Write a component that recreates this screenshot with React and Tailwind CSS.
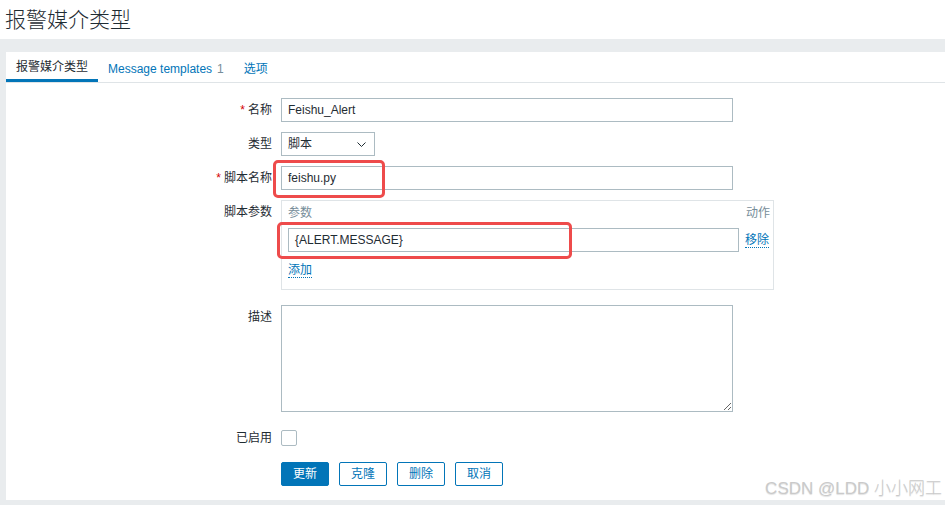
import { useState } from 'react'

const font = { fontFamily: '"Liberation Sans", Arial, "Noto Sans CJK SC", sans-serif' }

function Label({ children, required, top }) {
  return (
    <div className={`w-[266px] shrink-0 text-right text-[12px] leading-[14px] text-[#1f2c33] ${top ? 'pt-[5px]' : ''}`}>
      {required && <span className="text-[#d40000] mr-[3px]">*</span>}
      {children}
    </div>
  )
}

function TextInput({ value, width = 'w-[452px]' }) {
  return (
    <div className={`${width} h-[24px] border border-[#acbbc2] bg-white px-[6px] flex items-center text-[12px] text-[#1f2c33]`}>
      {value}
    </div>
  )
}

function Link({ children }) {
  return (
    <span className="text-[12px] leading-[14px] text-[#0275b8] border-b border-dotted border-[#0275b8]">{children}</span>
  )
}

function Btn({ children, primary }) {
  return (
    <div
      className={`w-[48px] h-[24px] flex items-center justify-center text-[12px] rounded-[2px] border ${
        primary ? 'bg-[#0275b8] border-[#0275b8] text-white' : 'bg-white border-[#0275b8] text-[#0275b8]'
      }`}
    >
      {children}
    </div>
  )
}

export default function App() {
  const [enabled, setEnabled] = useState(false)

  return (
    <div className="relative w-[945px] h-[505px] overflow-hidden bg-[#e9ecee]" style={font}>
      {/* header */}
      <div className="h-[39px] bg-white flex items-center pl-[5px]">
        <h1 className="text-[21px] leading-none text-[#1f2c33] font-light">报警媒介类型</h1>
      </div>

      {/* panel */}
      <div className="ml-[6px] mt-[13px] h-[448px] bg-white">
        {/* tabs */}
        <div className="flex h-[31px] border-b border-[#dfe4e7] text-[12px]">
          <div className="px-[10px] flex items-center text-[#1f2c33] border-b-[3px] border-[#0275b8] pt-[3px]">报警媒介类型</div>
          <div className="px-[10px] flex items-center text-[#0275b8] pt-[3px]">
            Message templates<span className="ml-[5px] text-[#768d99]">1</span>
          </div>
          <div className="px-[10px] flex items-center text-[#0275b8] pt-[3px]">选项</div>
        </div>

        {/* form */}
        <div className="pt-[15px] flex flex-col">
          <div className="flex items-center gap-[9px]">
            <Label required>名称</Label>
            <TextInput value="Feishu_Alert" />
          </div>

          <div className="flex items-center gap-[9px] mt-[10px]">
            <Label>类型</Label>
            <div className="w-[94px] h-[24px] border border-[#acbbc2] bg-white pl-[6px] pr-[8px] flex items-center justify-between text-[12px] text-[#1f2c33]">
              脚本
              <svg width="9" height="5" viewBox="0 0 9 5" fill="none" stroke="#1f2c33" strokeWidth="1">
                <path d="M0.5 0.5l4 4 4-4" />
              </svg>
            </div>
          </div>

          <div className="flex items-center gap-[9px] mt-[10px]">
            <Label required>脚本名称</Label>
            <TextInput value="feishu.py" />
          </div>

          <div className="flex items-start gap-[9px] mt-[10px]">
            <Label top>脚本参数</Label>
            <div className="w-[493px] h-[90px] border border-[#dfe4e7] pl-[6px] pr-[3px] pt-[5px] text-[12px]">
              <div className="flex justify-between leading-[14px] text-[#768d99]">
                <span>参数</span>
                <span>动作</span>
              </div>
              <div className="flex items-center gap-[6px] mt-[8px]">
                <TextInput value="{ALERT.MESSAGE}" width="w-[451px]" />
                <Link>移除</Link>
              </div>
              <div className="mt-[11px] leading-[14px]">
                <Link>添加</Link>
              </div>
            </div>
          </div>

          <div className="flex items-start gap-[9px] mt-[15px]">
            <Label top>描述</Label>
            <textarea
              className="w-[452px] h-[107px] border border-[#acbbc2] bg-white text-[12px] outline-none"
              defaultValue=""
            />
          </div>

          <div className="flex items-center gap-[9px] mt-[18px] h-[16px]">
            <Label>已启用</Label>
            <div
              onClick={() => setEnabled(!enabled)}
              className="w-[16px] h-[16px] border border-[#acbbc2] rounded-[2px] bg-white"
            />
          </div>

          <div className="flex gap-[10px] mt-[16px] ml-[275px]">
            <Btn primary>更新</Btn>
            <Btn>克隆</Btn>
            <Btn>删除</Btn>
            <Btn>取消</Btn>
          </div>
        </div>
      </div>

      {/* annotation highlights */}
      <div className="absolute left-[273px] top-[160px] w-[112px] h-[38px] border-[3px] border-[#ee4b4b] rounded-[5px]" />
      <div className="absolute left-[277px] top-[222px] w-[295px] h-[37px] border-[3px] border-[#ee4b4b] rounded-[5px]" />

      {/* watermark */}
      <div
        className="absolute right-[3px] top-[478px] text-[17px] leading-[22px] text-[#cacaca] font-light"
        style={{ textShadow: '0 1px 1px rgba(0,0,0,0.12)' }}
      >
        CSDN @LDD 小小网工
      </div>
    </div>
  )
}
